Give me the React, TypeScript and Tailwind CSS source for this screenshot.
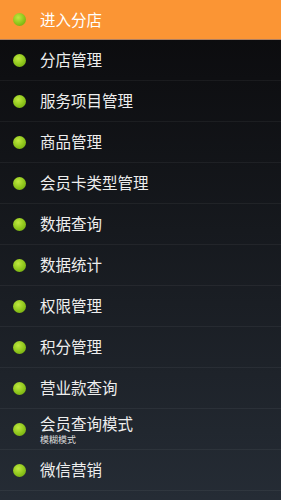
import React from 'react';

const items: { title: string; sub?: string }[] = [
  { title: '分店管理' },
  { title: '服务项目管理' },
  { title: '商品管理' },
  { title: '会员卡类型管理' },
  { title: '数据查询' },
  { title: '数据统计' },
  { title: '权限管理' },
  { title: '积分管理' },
  { title: '营业款查询' },
  { title: '会员查询模式', sub: '模糊模式' },
  { title: '微信营销' },
];

function Dot() {
  return (
    <span className="w-[13px] h-[13px] rounded-full shrink-0 bg-[radial-gradient(circle_at_40%_35%,#c0e840,#8cc41a_55%,#6a9e0e)]" />
  );
}

export default function App() {
  return (
    <div
      className="w-[281px] h-[500px] overflow-hidden bg-gradient-to-b from-[#0a0a0c] to-[#252c35] text-[#eeeeee]"
      style={{ fontFamily: '"Noto Sans CJK SC", "Noto Sans", sans-serif' }}
    >
      <div className="h-10 flex items-center gap-[14px] pl-[13px] bg-[#fb9534] border-b border-[#b08060]">
        <Dot />
        <span className="text-[15.5px] text-white">进入分店</span>
      </div>
      {items.map((it) => (
        <div
          key={it.title}
          className="h-[41px] flex items-center gap-[14px] pl-[13px] border-b border-white/[0.05]"
        >
          <Dot />
          {it.sub ? (
            <div className="flex flex-col">
              <span className="text-[15.5px] leading-[22px]">{it.title}</span>
              <span className="text-[9px] leading-[12px] text-[#dddddd]">{it.sub}</span>
            </div>
          ) : (
            <span className="text-[15.5px]">{it.title}</span>
          )}
        </div>
      ))}
    </div>
  );
}
